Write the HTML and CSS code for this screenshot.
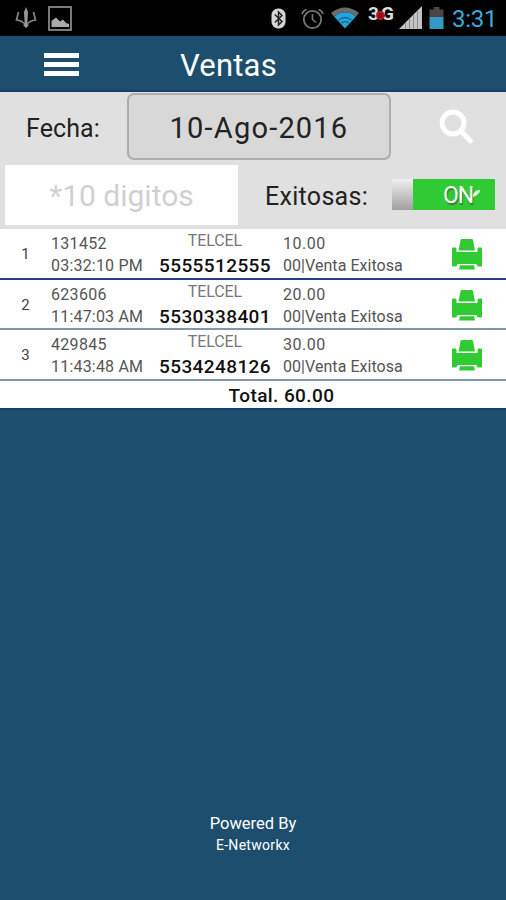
FILE: index.html
```html
<!DOCTYPE html>
<html lang="es">
<head>
	<meta charset="utf-8">
	<title>Ventas</title>
	<link rel="stylesheet" href="styles.css">
</head>
<body>
	<svg class="defs" width="0" height="0">
		<symbol id="printer" viewBox="0 0 32 32">
			<path d="M7.500 12.500 L9.500 2 Q9.800 1 11 1 H20.500 Q21.700 1 22 2 L24 12.500 Z"/>
			<path d="M1 10.500 Q1 9.500 2 9.500 H4.500 Q5.500 9.500 5.500 11 V14 H26.500 V11 Q26.500 9.500 27.500 9.500 H30 Q31 9.500 31 10.500 V27.500 Q31 28.500 30 28.500 H27.500 Q26 28.500 25.500 26 H6.500 Q6 28.500 4.500 28.500 H2 Q1 28.500 1 27.500 Z"/>
			<path d="M9 27.300 H23 L24 31.500 H8 Z"/>
		</symbol>
	</svg>
	<div id="status">
		<svg class="trident" width="22" height="22" viewBox="0 0 22 22">
			<path d="M3.500 5 L1.500 13 Q7 13.500 11 18 Q15 13.500 20.500 13 L18.500 5" fill="none" stroke="#888" stroke-width="1.700"/>
			<path d="M11 0 L13 5 L12.300 17 L14 18 L11 21 L8 18 L9.700 17 L9 5 Z" fill="#999"/>
		</svg>
		<svg class="photo" width="24" height="25" viewBox="0 0 24 25">
			<rect x="1" y="1" width="22" height="23" fill="none" stroke="#999" stroke-width="1.600"/>
			<path d="M3.500 21 V15 L8 11.500 L12 15.500 L15 13.500 L18 17 L21 18 V21 Z" fill="#aaa"/>
		</svg>
		<svg class="bluetooth" width="15" height="21" viewBox="0 0 15 21">
			<rect x="0.500" y="0.500" width="14" height="20" rx="6.500" fill="#d6d6d6"/>
			<path d="M3.800 6.500 L11 13.500 L7.500 17 V4 L11 7.500 L3.800 14.500" fill="none" stroke="#222" stroke-width="1.500"/>
		</svg>
		<svg class="alarm" width="23" height="22" viewBox="0 0 23 22">
			<circle cx="11.500" cy="11.500" r="8.700" fill="none" stroke="#777" stroke-width="1.800"/>
			<path d="M11.500 6 V11.500 L15 14.500 M1 6 Q2 2.500 5.500 1.500 M22 6 Q21 2.500 17.500 1.500" fill="none" stroke="#777" stroke-width="1.600"/>
		</svg>
		<svg class="wifi" width="28" height="22" viewBox="0 0 28 22">
			<path d="M0 6 Q14 -5 28 6 L25 9.500 Q14 1 3 9.500 Z" fill="#6c6c6c"/>
			<path d="M3 9.500 Q14 1 25 9.500 L14 21.500 Z" fill="#25a5dc"/>
			<path d="M7.500 13 Q14 8 20.500 13 M10.500 16 Q14 13 17.500 16" fill="none" stroke="#14688f" stroke-width="1.300"/>
		</svg>
		<span class="net">3<i></i>G</span>
		<svg class="signal" width="23" height="23" viewBox="0 0 23 23">
			<path d="M0 23 L23 0 V23 Z" fill="#c4c4c4"/>
			<path d="M6.500 16.500 V23 M10.500 12.500 V23 M14.500 8.500 V23 M18.500 4.500 V23" stroke="#8c8c8c" stroke-width="1"/>
		</svg>
		<svg class="battery" width="15" height="22" viewBox="0 0 15 22">
			<path d="M0.500 2.500 H4.500 V0 H10.500 V2.500 H14.500 V10 H0.500 Z" fill="#4a4543"/>
			<rect x="0.500" y="10" width="14" height="12" fill="#3199c4"/>
		</svg>
		<span class="clock">3:31</span>
	</div>
	<div id="header">
		<a href="javascript:;" class="menu"><span></span><span></span><span></span></a>
		<h1>Ventas</h1>
	</div>
	<div id="filter">
		<div class="line date">
			<label>Fecha:</label>
			<button>10-Ago-2016</button>
			<svg class="search" width="36" height="36" viewBox="0 0 36 36">
				<circle cx="14" cy="14" r="11"/>
				<path d="M22 22 L31.500 32"/>
			</svg>
		</div>
		<div class="line phone">
			<div class="number">*10 digitos</div>
			<label>Exitosas:</label>
			<div class="switch"><div class="knob"></div><div class="on">ON<svg width="7" height="8" viewBox="0 0 7 8"><path d="M0 8 Q0 1 7 1 Q7 5 0 8 Z" fill="#e4ffe4"/></svg></div></div>
		</div>
	</div>
	<div id="list">
		<div class="row first">
			<div class="index">1</div>
			<div class="folio"><p>131452</p><p class="time">03:32:10 PM</p></div>
			<div class="tel"><p>TELCEL</p><b>5555512555</b></div>
			<div class="amount"><p>10.00</p><p class="result">00|Venta Exitosa</p></div>
			<svg class="print" width="32" height="32"><use href="#printer"/></svg>
		</div>
		<div class="row">
			<div class="index">2</div>
			<div class="folio"><p>623606</p><p class="time">11:47:03 AM</p></div>
			<div class="tel"><p>TELCEL</p><b>5530338401</b></div>
			<div class="amount"><p>20.00</p><p class="result">00|Venta Exitosa</p></div>
			<svg class="print" width="32" height="32"><use href="#printer"/></svg>
		</div>
		<div class="row">
			<div class="index">3</div>
			<div class="folio"><p>429845</p><p class="time">11:43:48 AM</p></div>
			<div class="tel"><p>TELCEL</p><b>5534248126</b></div>
			<div class="amount"><p>30.00</p><p class="result">00|Venta Exitosa</p></div>
			<svg class="print" width="32" height="32"><use href="#printer"/></svg>
		</div>
		<div class="total">Total. 60.00</div>
	</div>
	<div id="footer">
		<p>Powered By</p>
		<p class="brand">E-Networkx</p>
	</div>
</body>
</html>
```

FILE: styles.css
```css
*{ margin: 0; padding: 0; box-sizing: border-box;}
body{
	width: 506px;
	height: 900px;
	display: flex;
	flex-direction: column;
	overflow: hidden;
	background: #1e4e6e;
	font-family: Roboto, "Liberation Sans", sans-serif;
	color: #222;
}
.defs{ position: absolute;}
svg{ display: block; flex: none;}

/* status bar */
#status{ height: 36px; flex: none; display: flex; align-items: flex-start; padding: 6px 0 0 15px; background: #000;}
#status .trident{ margin-top: 1px;}
#status .photo{ margin-left: 11px;}
#status .bluetooth{ margin: 2px 0 0 199px;}
#status .alarm{ margin: 2px 0 0 15px;}
#status .wifi{ margin: 1px 0 0 7px;}
#status .net{ position: relative; width: 27px; margin: -2px 0 0 9px; font-size: 19px; line-height: 19px; font-weight: bold; color: #ddd; letter-spacing: 2px; white-space: nowrap;}
#status .net i{ position: absolute; left: 8px; top: 7px; width: 9px; height: 9px; border: 2px solid #c4131f; border-radius: 50%; background: #7d1119;}
#status .signal{ margin-left: 4px;}
#status .battery{ margin: 1px 0 0 7px;}
#status .clock{ margin-left: 8px; font-size: 24px; line-height: 26px; color: #35aede; letter-spacing: -.3px;}

/* title bar */
#header{ height: 56px; flex: none; display: flex; padding-left: 44px; border-bottom: 2px solid #134067; color: #fff;}
.menu{ width: 35px; padding-top: 17px;}
.menu span{ display: block; height: 5px; margin-bottom: 4px; background: #fff;}
#header h1{ margin-left: 101px; font-size: 31px; line-height: 60px; font-weight: normal; letter-spacing: .2px;}

/* filters */
#filter{ height: 137px; flex: none; background: #e0e0e0;}
#filter .line{ display: flex;}
#filter label{ font-size: 25px; color: #222; letter-spacing: .3px; white-space: nowrap;}
.date{ height: 73px; padding: 1px 0 0 26px;}
#filter .date label{ width: 101px; line-height: 71px; letter-spacing: .1px;}
.date button{ width: 264px; height: 67px; border: 2px solid #adadad; border-radius: 7px; background: #d8d8d8; font: 29px/66px Roboto, "Liberation Sans", sans-serif; letter-spacing: 1.2px; color: #222;}
.search{ margin: 16px 0 0 48px; fill: none; stroke: #fff; stroke-width: 4.800; stroke-linecap: round;}
.phone{ padding-left: 5px;}
.number{ width: 233px; height: 60px; background: #fff; color: #d0d0d0; font-size: 30px; line-height: 62px; text-align: center;}
.phone label{ width: 127px; margin-left: 27px; line-height: 63px;}
.switch{ display: flex; width: 103px; height: 31px; margin-top: 14px;}
.knob{ width: 21px; background: linear-gradient(#eee, #a0a0a0);}
.on{ display: flex; width: 82px; padding-left: 30px; background: #30cb32; color: #fff; font-size: 23px; line-height: 33px; letter-spacing: -1px; text-shadow: 1px 2px 1px #397a3a;}
.on svg{ margin: 10px 0 0 0;}

/* sales */
#list{ flex: none; background: #fff; border-bottom: 2px solid #123e73;}
.row{ display: flex; height: 50.700px; border-bottom: 2px solid #8197ab; white-space: nowrap;}
.first{ border-color: #22417d;}
.row p{ font-size: 16px; line-height: 22px; color: #555;}
.index{ width: 51px; text-align: center; font-size: 15px; line-height: 50px; color: #444;}
.folio{ width: 108px; padding-top: 4px;}
.folio p{ letter-spacing: .3px;}
.folio .time{ letter-spacing: .2px;}
.tel{ width: 112px; padding-top: 1px; text-align: center;}
.tel p{ color: #777; font-size: 16px; letter-spacing: -.1px;}
.tel b{ display: block; margin-top: 3px; font-size: 19px; line-height: 22px; font-weight: 500; color: #111; letter-spacing: .4px;}
.amount{ width: 180px; padding: 4px 0 0 12px;}
.amount p{ letter-spacing: .5px;}
.amount .result{ letter-spacing: .05px;}
.print{ margin-top: 9px; fill: #30cb32;}
.total{ height: 27px; padding-left: 57px; text-align: center; font-size: 19px; line-height: 30px; font-weight: 500; color: #111; letter-spacing: .4px;}

#footer{ margin-top: auto; height: 87px; flex: none; text-align: center; color: #fff; font-size: 16.500px; line-height: 22px;}
#footer .brand{ font-size: 14px; line-height: 21px; letter-spacing: .3px;}
```
